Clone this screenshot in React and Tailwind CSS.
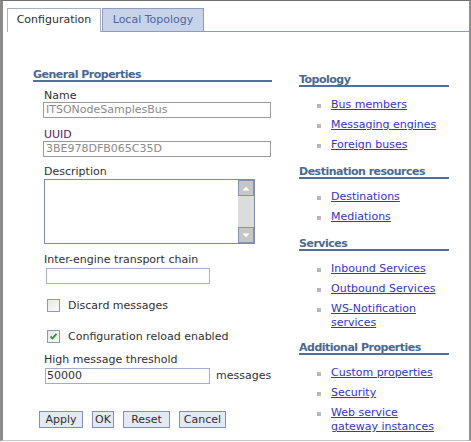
import React from "react";

function Heading({ children, className = "" }) {
  return (
    <div className={"font-bold tracking-[-0.5px] text-[#4a6890] leading-[11px] h-[13px] border-b-2 border-[#50709e] " + className}>
      {children}
    </div>
  );
}

function LinkItem({ children }) {
  return (
    <div className="flex">
      <div className="w-[14px] shrink-0 pt-[6px] ml-[18px]">
        <div className="w-[4px] h-[4px] bg-[#b8b8b8]" />
      </div>
      <a className="w-[115px] text-[#3434c8] underline leading-[14px] cursor-pointer">{children}</a>
    </div>
  );
}

function Checkbox({ checked }) {
  return (
    <div className="w-[13px] h-[13px] border border-[#8c9bb3] bg-gradient-to-br from-[#e6e6e6] to-[#fbfbfb] flex items-center justify-center">
      {checked && (
        <svg width="9" height="9" viewBox="0 0 9 9">
          <path d="M1.5 4.5 L3.5 6.5 L7.5 1.8" stroke="#22a022" strokeWidth="1.8" fill="none" />
        </svg>
      )}
    </div>
  );
}

function Field({ children, className = "", textClass = "" }) {
  return (
    <div className={"h-[16px] border bg-white flex items-center leading-[14px] " + className + " " + textClass}>
      {children}
    </div>
  );
}

function Btn({ children, w }) {
  return (
    <div className={"h-[17px] border border-[#7f92b3] bg-[#e3eaf5] text-[#303030] flex items-center justify-center leading-[13px] " + w}>
      {children}
    </div>
  );
}

export default function App() {
  return (
    <div className="w-[471px] h-[442px] bg-white overflow-hidden font-['DejaVu_Sans',sans-serif] text-[11px] text-[#303030]">
      <div className="h-[441px] border-t border-t-[#6e6e6e] border-l-[3px] border-l-[#8a8a8a] border-r-2 border-r-[#8e8e8e] border-b border-b-[#c6c6c6] flex flex-col">
        {/* tabs */}
        <div className="flex items-end pt-[7px]">
          <div className="w-[4px]" />
          <div className="w-[94px] h-[24px] border-t border-l border-r border-[#a3b0c6] bg-white flex items-center justify-center text-[#2e2e2e]">
            Configuration
          </div>
          <div className="w-[1px] h-[24px] border-b border-[#8d9dbc]" />
          <div className="w-[102px] h-[24px] border border-[#8d9dbc] bg-[#c8d3ea] flex items-center justify-center text-[#4c679a]">
            Local Topology
          </div>
          <div className="flex-1 h-[24px] border-b border-[#8d9dbc]" />
        </div>

        {/* body */}
        <div className="flex">
          {/* left column */}
          <div className="w-[270px] pl-[30px] shrink-0">
            <Heading className="mt-[37px] w-[239px]">General Properties</Heading>
            <div className="pl-[10px]">
              <div className="mt-[8px] leading-[12px] pl-[1px]">Name</div>
              <Field className="w-[228px] border-[#9a9a9a] pl-[2px]" textClass="text-[#8a8a8a]">ITSONodeSamplesBus</Field>
              <div className="mt-[11px] leading-[12px] pl-[1px] text-[#5e1a5e]">UUID</div>
              <Field className="w-[228px] border-[#9a9a9a] pl-[2px]" textClass="text-[#8a8a8a]">3BE978DFB065C35D</Field>
              <div className="mt-[9px] leading-[12px] pl-[1px]">Description</div>
              <div className="ml-[1px] mt-[1px] w-[211px] h-[65px] border border-[#7c8caa] bg-white flex justify-end">
                <div className="w-[16px] flex flex-col">
                  <div className="h-[16px] border border-[#8494b0] bg-[#c6c6c6] flex items-center justify-center">
                    <svg width="8" height="5" viewBox="0 0 8 5"><path d="M0.5 4.5 L4 0.8 L7.5 4.5 Z" fill="#ffffff" /></svg>
                  </div>
                  <div className="flex-1 bg-[#dcdcdc]" />
                  <div className="h-[16px] border border-[#8494b0] bg-[#c6c6c6] flex items-center justify-center">
                    <svg width="8" height="5" viewBox="0 0 8 5"><path d="M0.5 0.5 L4 4.2 L7.5 0.5 Z" fill="#ffffff" /></svg>
                  </div>
                </div>
              </div>
              <div className="mt-[10px] leading-[12px] pl-[1px]">Inter-engine transport chain</div>
              <Field className="ml-[3px] mt-[2px] w-[164px] border-[#a6b4ca]" />
              <div className="mt-[15px] ml-[4px] flex items-center h-[13px]">
                <Checkbox />
                <span className="ml-[8px] leading-[13px]">Discard messages</span>
              </div>
              <div className="mt-[18px] ml-[4px] flex items-center h-[13px]">
                <Checkbox checked />
                <span className="ml-[8px] leading-[13px]">Configuration reload enabled</span>
              </div>
              <div className="mt-[11px] leading-[12px] pl-[1px]">High message threshold</div>
              <div className="mt-[2px] flex items-center">
                <Field className="ml-[2px] w-[165px] border-[#9fafc8] pl-[1px]" textClass="text-[#303030]">50000</Field>
                <span className="ml-[6px] leading-[14px]">messages</span>
              </div>
            </div>
            <div className="mt-[27px] ml-[6px] flex gap-[9px]">
              <Btn w="w-[44px]">Apply</Btn>
              <Btn w="w-[22px]">OK</Btn>
              <Btn w="w-[47px]">Reset</Btn>
              <Btn w="w-[47px]">Cancel</Btn>
            </div>
          </div>

          {/* right column */}
          <div className="pl-[26px] w-[176px]">
            <Heading className="mt-[42px] w-[150px]">Topology</Heading>
            <div className="mt-[11px] flex flex-col gap-[6px]">
              <LinkItem>Bus members</LinkItem>
              <LinkItem>Messaging engines</LinkItem>
              <LinkItem>Foreign buses</LinkItem>
            </div>
            <Heading className="mt-[14px] w-[150px]">Destination resources</Heading>
            <div className="mt-[11px] flex flex-col gap-[6px]">
              <LinkItem>Destinations</LinkItem>
              <LinkItem>Mediations</LinkItem>
            </div>
            <Heading className="mt-[14px] w-[150px]">Services</Heading>
            <div className="mt-[11px] flex flex-col gap-[6px]">
              <LinkItem>Inbound Services</LinkItem>
              <LinkItem>Outbound Services</LinkItem>
              <LinkItem>WS-Notification services</LinkItem>
            </div>
            <Heading className="mt-[12px] w-[150px]">Additional Properties</Heading>
            <div className="mt-[11px] flex flex-col gap-[6px]">
              <LinkItem>Custom properties</LinkItem>
              <LinkItem>Security</LinkItem>
              <LinkItem>Web service gateway instances</LinkItem>
            </div>
          </div>
        </div>
      </div>
    </div>
  );
}
